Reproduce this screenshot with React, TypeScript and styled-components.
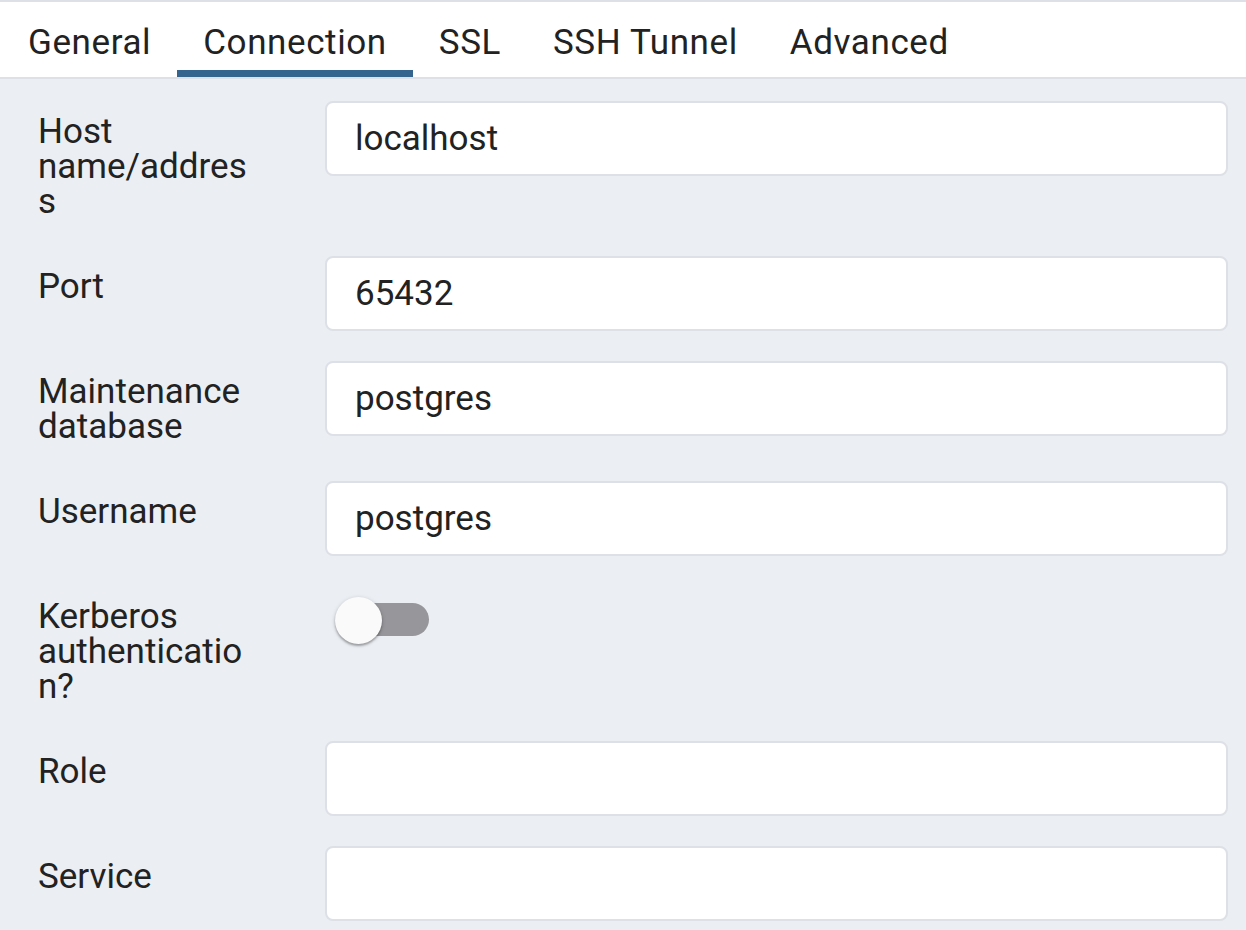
import React from "react";
import styled, { createGlobalStyle } from "styled-components";

const GlobalStyle = createGlobalStyle`
  html, body {
    margin: 0;
    padding: 0;
    background: #ebeef3;
  }
  body {
    font-family: Roboto, "Liberation Sans", sans-serif;
    color: #222222;
  }
`;

// Whole dialog body
const Page = styled.div`
  width: 1246px;
  height: 930px;
  overflow: hidden;
  border-top: 2px solid #dde0e6;
  box-sizing: border-box;
  display: flex;
  flex-direction: column;
`;

// Tab strip at the top
const TabBar = styled.div`
  display: flex;
  flex-shrink: 0;
  height: 77px;
  box-sizing: border-box;
  padding-left: 2px;
  background: #ffffff;
  border-bottom: 2px solid #dde0e6;
`;

const Tab = styled.div<{ $active?: boolean }>`
  display: flex;
  align-items: center;
  padding: 12px 26px 0;
  font-size: 35px;
  letter-spacing: 0.6px;
  color: #222222;
  border-bottom: 7px solid ${(p) => (p.$active ? "#35648f" : "transparent")};
`;

// Grey form area
const Form = styled.div`
  flex: 1;
  background: #ebeef3;
  padding: 22px 18px 0 38px;
`;

const Row = styled.div`
  display: grid;
  grid-template-columns: 287px 1fr;
  align-items: start;
  margin-bottom: 30px;
`;

const Label = styled.div`
  width: 216px;
  padding: 13px 0 7px;
  font-size: 35px;
  line-height: 35px;
  overflow-wrap: anywhere;
`;

const Input = styled.input`
  height: 75px;
  width: 100%;
  box-sizing: border-box;
  border: 2px solid #dde0e6;
  border-radius: 8px;
  background: #ffffff;
  padding: 0 28px;
  font-family: Roboto, "Liberation Sans", sans-serif;
  font-size: 35px;
  color: #222222;
  outline: none;
`;

// Kerberos switch (off state)
const SwitchRoot = styled.div`
  position: relative;
  width: 96px;
  height: 47px;
  margin: 11px 0 0 10px;
`;

const SwitchTrack = styled.div`
  position: absolute;
  left: 1px;
  top: 6px;
  width: 93px;
  height: 33px;
  border-radius: 17px;
  background: #97979b;
`;

const SwitchThumb = styled.div`
  position: absolute;
  left: 0;
  top: 0;
  width: 47px;
  height: 47px;
  border-radius: 50%;
  background: #fafafa;
  box-shadow: 0 2px 2px rgba(0, 0, 0, 0.25), 0 1px 4px rgba(0, 0, 0, 0.18);
`;

const tabs = ["General", "Connection", "SSL", "SSH Tunnel", "Advanced"];

const fields: { label: string; value?: string; toggle?: boolean }[] = [
  { label: "Host name/address", value: "localhost" },
  { label: "Port", value: "65432" },
  { label: "Maintenance database", value: "postgres" },
  { label: "Username", value: "postgres" },
  { label: "Kerberos authentication?", toggle: true },
  { label: "Role", value: "" },
  { label: "Service", value: "" },
];

const App: React.FC = () => {
  return (
    <>
      <GlobalStyle />
      <Page>
        <TabBar>
          {tabs.map((t) => (
            <Tab key={t} $active={t === "Connection"}>
              {t}
            </Tab>
          ))}
        </TabBar>
        <Form>
          {fields.map((f) => (
            <Row key={f.label}>
              <Label>{f.label}</Label>
              {f.toggle ? (
                <SwitchRoot>
                  <SwitchTrack />
                  <SwitchThumb />
                </SwitchRoot>
              ) : (
                <Input defaultValue={f.value} readOnly />
              )}
            </Row>
          ))}
        </Form>
      </Page>
    </>
  );
};

export default App;
